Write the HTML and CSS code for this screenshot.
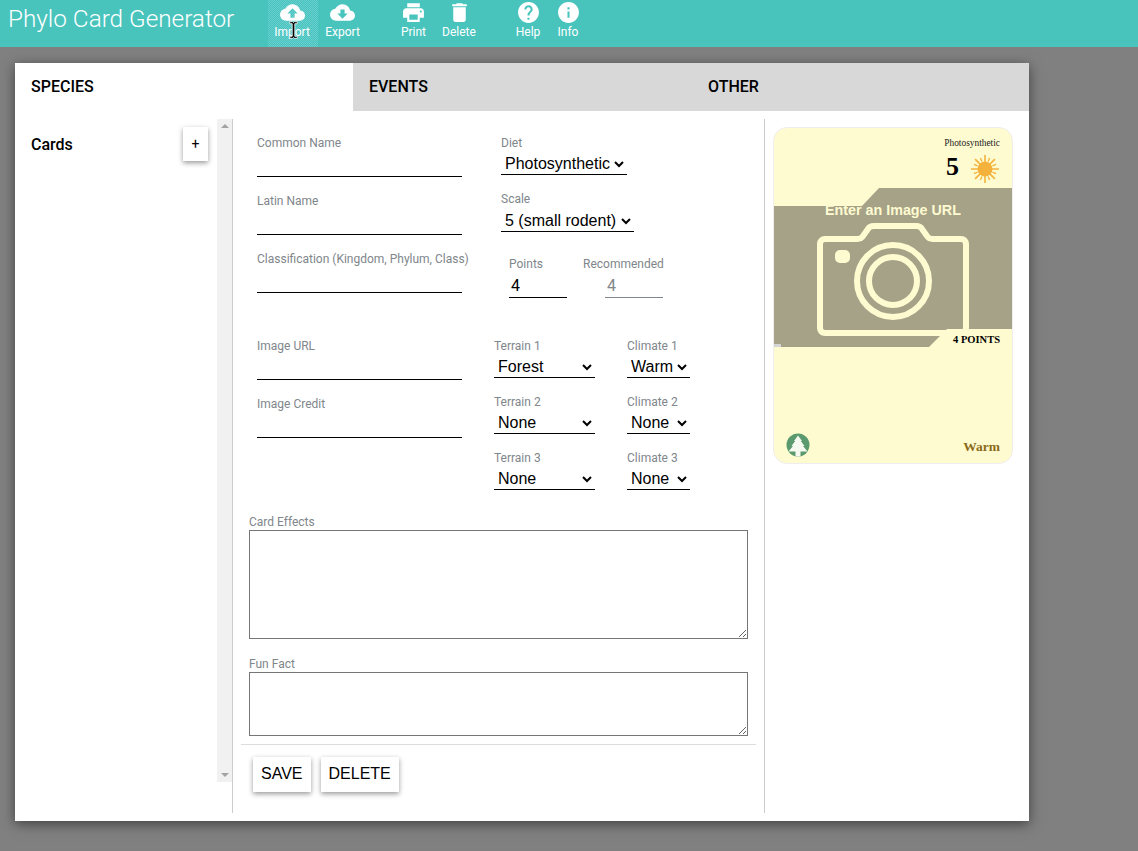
FILE: index.html
```html
<!DOCTYPE html>
<html lang="en">
<head>
    <meta charset="UTF-8">
    <meta name="viewport" content="width=device-width, initial-scale=1.0">
    <title>Phylo Card Generator</title>
    <link rel="stylesheet" href="styles.css">
</head>
<body>
    <header class="topbar">
        <h1 class="app-title">Phylo Card Generator</h1>
        <nav class="tools">
            <a class="tool tool-import">
                <svg class="tool-icon" viewBox="0 0 24 24"><path d="M19.35 10.04A7.49 7.49 0 0 0 12 4C9.11 4 6.6 5.64 5.35 8.04A5.99 5.99 0 0 0 0 14c0 3.31 2.69 6 6 6h13c2.76 0 5-2.24 5-5 0-2.64-2.05-4.78-4.65-4.96zM14 13v4h-4v-4H7l5-5 5 5h-3z"/></svg>
                <span>Import</span>
            </a>
            <a class="tool tool-export">
                <svg class="tool-icon" viewBox="0 0 24 24"><path d="M19.35 10.04A7.49 7.49 0 0 0 12 4C9.11 4 6.6 5.64 5.35 8.04A5.99 5.99 0 0 0 0 14c0 3.31 2.69 6 6 6h13c2.76 0 5-2.24 5-5 0-2.64-2.05-4.78-4.65-4.96zM17 13l-5 5-5-5h3V9h4v4h3z"/></svg>
                <span>Export</span>
            </a>
            <a class="tool tool-print">
                <svg class="tool-icon" viewBox="0 0 24 24"><path d="M19 8H5c-1.66 0-3 1.34-3 3v6h4v4h12v-4h4v-6c0-1.66-1.34-3-3-3zm-3 11H8v-5h8v5zm3-7c-.55 0-1-.45-1-1s.45-1 1-1 1 .45 1 1-.45 1-1 1zm-1-9H6v4h12V3z"/></svg>
                <span>Print</span>
            </a>
            <a class="tool tool-delete">
                <svg class="tool-icon" viewBox="0 0 24 24"><path d="M6 19c0 1.1.9 2 2 2h8c1.1 0 2-.9 2-2V7H6v12zM19 4h-3.500l-1-1h-5l-1 1H5v2h14V4z"/></svg>
                <span>Delete</span>
            </a>
            <a class="tool tool-help">
                <svg class="tool-icon" viewBox="0 0 24 24"><path d="M12 2C6.480 2 2 6.480 2 12s4.480 10 10 10 10-4.480 10-10S17.520 2 12 2zm1 17h-2v-2h2v2zm2.070-7.750l-.9.920C13.450 12.900 13 13.500 13 15h-2v-.5c0-1.100.450-2.100 1.170-2.830l1.240-1.260c.37-.36.590-.86.590-1.410 0-1.100-.9-2-2-2s-2 .9-2 2H8c0-2.210 1.790-4 4-4s4 1.790 4 4c0 .88-.36 1.680-.93 2.250z"/></svg>
                <span>Help</span>
            </a>
            <a class="tool tool-info">
                <svg class="tool-icon" viewBox="0 0 24 24"><path d="M12 2C6.480 2 2 6.480 2 12s4.480 10 10 10 10-4.480 10-10S17.520 2 12 2zm1 15h-2v-6h2v6zm0-8h-2V7h2v2z"/></svg>
                <span>Info</span>
            </a>
        </nav>
    </header>

    <main class="panel">
        <div class="tabs">
            <div class="tab active">SPECIES</div>
            <div class="tab">EVENTS</div>
            <div class="tab">OTHER</div>
        </div>
        <div class="workspace">
            <aside class="sidebar">
                <div class="sidebar-head">
                    <h2>Cards</h2>
                    <button class="add-btn" type="button">+</button>
                </div>
            </aside>
            <div class="scrollbar">
                <span class="arrow-up"></span>
                <span class="arrow-down"></span>
            </div>

            <section class="editor">
                <div class="fields">
                    <div class="col-left">
                        <div class="field">
                            <label>Common Name</label>
                            <input type="text">
                        </div>
                        <div class="field">
                            <label>Latin Name</label>
                            <input type="text">
                        </div>
                        <div class="field">
                            <label>Classification (Kingdom, Phylum, Class)</label>
                            <input type="text">
                        </div>
                        <div class="field field-image">
                            <label>Image URL</label>
                            <input type="text">
                        </div>
                        <div class="field">
                            <label>Image Credit</label>
                            <input type="text">
                        </div>
                    </div>
                    <div class="col-right">
                        <div class="pick">
                            <label>Diet</label>
                            <select class="sel-diet"><option>Photosynthetic</option></select>
                        </div>
                        <div class="pick">
                            <label>Scale</label>
                            <select class="sel-scale"><option>5 (small rodent)</option></select>
                        </div>
                        <div class="points-row">
                            <div class="num">
                                <label>Points</label>
                                <input type="text" value="4">
                            </div>
                            <div class="num num-off">
                                <label>Recommended</label>
                                <input type="text" value="4" disabled>
                            </div>
                        </div>
                        <div class="habitat">
                            <div class="pick">
                                <label>Terrain 1</label>
                                <select class="sel-terrain"><option>Forest</option></select>
                            </div>
                            <div class="pick">
                                <label>Climate 1</label>
                                <select class="sel-climate"><option>Warm</option></select>
                            </div>
                            <div class="pick">
                                <label>Terrain 2</label>
                                <select class="sel-terrain"><option>None</option></select>
                            </div>
                            <div class="pick">
                                <label>Climate 2</label>
                                <select class="sel-climate"><option>None</option></select>
                            </div>
                            <div class="pick">
                                <label>Terrain 3</label>
                                <select class="sel-terrain"><option>None</option></select>
                            </div>
                            <div class="pick">
                                <label>Climate 3</label>
                                <select class="sel-climate"><option>None</option></select>
                            </div>
                        </div>
                    </div>
                </div>

                <div class="text-block block-effects">
                    <label>Card Effects</label>
                    <textarea class="effects"></textarea>
                </div>
                <div class="text-block">
                    <label>Fun Fact</label>
                    <textarea class="fact"></textarea>
                </div>
                <div class="actions">
                    <button type="button">SAVE</button>
                    <button type="button">DELETE</button>
                </div>
            </section>

            <section class="preview">
                <div class="card">
                    <div class="card-top">
                        <div class="card-diet">Photosynthetic</div>
                        <div class="card-scale">
                            <span class="scale-num">5</span>
                            <svg class="sun" viewBox="0 0 28 28">
                                <circle cx="14" cy="14" r="7.500"/>
                                <path class="rays" d="M14 0v7M14 21v7M0 14h7M21 14h7M4.100 4.100l5 5M18.900 18.900l5 5M23.900 4.100l-5 5M9.100 18.900l-5 5"/>
                                <path class="rays-short" d="M18.600 2.900l-1.500 3.700M10.900 21.400l-1.500 3.700M9.400 2.900l1.500 3.700M17.100 21.400l1.500 3.700M2.900 9.400l3.700 1.500M21.400 17.100l3.700 1.500M2.900 18.600l3.700-1.500M21.400 10.900l3.700-1.500"/>
                            </svg>
                        </div>
                    </div>
                    <div class="card-picture">
                        <div class="picture-label">Enter an Image URL</div>
                        <svg class="camera" viewBox="0 0 158 120">
                            <path d="M10 16h32c3 0 5-1 6-3l5-7c1-2 3-3 6-3h42c3 0 5 1 6 3l5 7c1 2 3 3 6 3h28c3 0 5 2 5 5v84c0 3-2 5-5 5H10c-3 0-5-2-5-5V21c0-3 2-5 5-5z"/>
                            <circle cx="78" cy="58" r="36"/>
                            <circle cx="78" cy="58" r="24"/>
                            <rect class="camera-dot" x="20" y="27" width="15" height="13" rx="5"/>
                        </svg>
                        <span class="broken-img"></span>
                    </div>
                    <div class="card-points">4 POINTS</div>
                    <div class="card-bottom">
                        <svg class="tree" viewBox="0 0 24 24">
                            <circle class="tree-bg" cx="12" cy="12" r="11.500"/>
                            <path class="tree-shape" d="M12 2.500L16 8h-1.200l3.700 5H17l4.500 5.500h-7v5h-5v-5h-7L7 13H5.500l3.700-5H8z"/>
                        </svg>
                        <span class="card-climate">Warm</span>
                    </div>
                </div>
            </section>
        </div>
    </main>

    <svg class="cursor" viewBox="0 0 9 18"><path d="M.7.700h3l.8.800.8-.8h3v2H5.800v12.600h2.500v2h-3l-.8-.8-.8.800h-3v-2h2.500V2.700H.7z"/></svg>
</body>
</html>
```

FILE: styles.css
```css
* {
    box-sizing: border-box;
}
html, body {
    height: 100%;
}
body {
    margin: 0;
    background: #808080;
    font-family: Roboto, "Liberation Sans", sans-serif;
    overflow: hidden;
}

/* top bar */
.topbar {
    display: flex;
    height: 47px;
    background: #48c4bd;
    color: #fff;
}
.app-title {
    margin: 0;
    width: 268px;
    padding: 3px 0 0 8px;
    font-size: 24.300px;
    font-weight: 300;
    line-height: 32px;
    white-space: nowrap;
}
.tools {
    display: flex;
}
.tool {
    display: flex;
    flex-direction: column;
    align-items: center;
    width: 40px;
    font-size: 12px;
    line-height: 14px;
}
.tool-icon {
    width: 25px;
    height: 25px;
    fill: #fff;
    display: block;
}
.tool-import {
    width: 50px;
    padding-right: 2px;
    background-color: #48c4bd;
    background-image: repeating-conic-gradient(#48c4bd 0 25%, #68ced0 0 50%);
    background-size: 2px 2px;
}
.tool-export { width: 49px; }
.tool-print { margin-left: 22px; width: 49px; }
.tool-delete { width: 42px; }
.tool-help { margin-left: 28px; }

/* main panel */
.panel {
    width: 1014px;
    margin: 16px 0 0 15px;
    height: 758px;
    background: #fff;
    box-shadow: 0 3px 12px rgba(0, 0, 0, 0.5);
}
.tabs {
    display: flex;
    height: 48px;
    background: #d8d8d8;
}
.tab {
    width: 338px;
    padding-left: 16px;
    font-size: 16px;
    font-weight: 500;
    line-height: 47px;
    color: #000;
}
.tab:last-child {
    padding-left: 17px;
}
.tab.active {
    background: #fff;
}
.workspace {
    display: flex;
    height: 694px;
    margin-top: 8px;
}

/* cards list */
.sidebar {
    width: 202px;
}
.sidebar-head {
    display: flex;
    justify-content: space-between;
    padding: 8px 9px 0 16px;
}
.sidebar-head h2 {
    margin: 0;
    font-size: 16px;
    font-weight: 500;
    line-height: 36px;
}
.add-btn {
    width: 25px;
    height: 34px;
    padding: 0;
    border: none;
    background: #fff;
    font-family: inherit;
    font-size: 14px;
    box-shadow: 0 2px 5px rgba(0, 0, 0, 0.4);
}
.scrollbar {
    display: flex;
    flex-direction: column;
    justify-content: space-between;
    align-items: center;
    width: 15px;
    height: 663px;
    padding: 5px 0;
    background: #f1f1f1;
}
.arrow-up {
    border: 4px solid transparent;
    border-top: none;
    border-bottom: 4px solid #a3a3a3;
}
.arrow-down {
    border: 4px solid transparent;
    border-bottom: none;
    border-top: 4px solid #a3a3a3;
}

/* form */
.editor {
    width: 533px;
    border-left: 1px solid #ccc;
    border-right: 1px solid #ccc;
    padding: 0 8px;
}
label {
    display: block;
    font-size: 12px;
    line-height: 14px;
    color: #80868b;
}
input, select, textarea {
    font-family: "Liberation Sans", Arial, sans-serif;
    color: #000;
}
.fields {
    display: flex;
    height: 396px;
    padding-top: 17px;
}
.col-left {
    width: 256px;
    padding-left: 16px;
}
.field {
    height: 58px;
}
.field label {
    white-space: nowrap;
}
.field input {
    display: block;
    width: 205px;
    height: 22px;
    margin-top: 5px;
    border: none;
    border-bottom: 1px solid #000;
    outline: none;
}
.field-image {
    margin-top: 29px;
}
.col-right {
    padding-left: 4px;
}
.pick label {
    margin-bottom: 3px;
}
.pick select {
    display: block;
    height: 22px;
    font-size: 16px;
    background: #fff;
    border: none;
    border-bottom: 1px solid #000;
    border-radius: 0;
    outline: none;
}
.col-right > .pick {
    height: 56px;
}
.pick .sel-diet {
    width: 126px;
}
.pick .sel-scale {
    width: 133px;
    margin-top: 4px;
}
.points-row {
    display: flex;
    gap: 16px;
    padding: 9px 0 0 8px;
    height: 91px;
}
.num input {
    display: block;
    width: 58px;
    height: 24px;
    margin-top: 3px;
    padding: 0 2px;
    font-size: 16px;
    font-family: Roboto, sans-serif;
    border: none;
    border-bottom: 1px solid #000;
    background: #fff;
    outline: none;
}
.num-off input {
    margin-left: 22px;
    color: #80868b;
    border-bottom-color: #80868b;
}
.habitat {
    display: grid;
    grid-template-columns: 133px 70px;
    grid-auto-rows: 56px;
    margin-left: -7px;
}
.sel-terrain {
    width: 101px;
}
.sel-climate {
    width: 63px;
}
.text-block {
    margin-bottom: 8px;
    padding: 0 0 0 8px;
}
.block-effects {
    margin-bottom: 18px;
}
.text-block label {
    margin-bottom: 1px;
}
.text-block textarea {
    display: block;
    width: 499px;
    padding: 2px;
    border: 1px solid #767676;
    border-radius: 0;
    outline: none;
}
.effects {
    height: 109px;
}
.fact {
    height: 64px;
}
.actions {
    display: flex;
    gap: 10px;
    padding: 12px 0 0 12px;
    border-top: 1px solid #ddd;
}
.actions button {
    height: 35px;
    padding: 0 8px 2px;
    border: none;
    background: #fff;
    font-family: "Liberation Sans", Arial, sans-serif;
    font-size: 16px;
    color: #000;
    box-shadow: 0 2px 5px rgba(0, 0, 0, 0.4);
}

/* card preview */
.preview {
    padding: 8px 0 0 8px;
}
.card {
    position: relative;
    width: 240px;
    height: 337px;
    background: #fffbd0;
    border: 1px solid #eee;
    border-radius: 14px;
    font-family: "Liberation Serif", "Times New Roman", serif;
    color: #000;
}
.card-top {
    height: 60px;
    padding: 9px 12px 0 0;
    text-align: right;
}
.card-diet {
    font-size: 9.400px;
    line-height: 12px;
    color: #222;
}
.card-scale {
    display: flex;
    justify-content: flex-end;
    align-items: center;
    gap: 12px;
    margin-top: 3px;
    font-size: 26px;
    font-weight: bold;
}
.scale-num {
    margin-bottom: 3px;
}
.sun {
    width: 28px;
    height: 28px;
    margin-right: 1px;
    fill: #f4b23c;
}
.rays {
    stroke: #f4b23c;
    stroke-width: 1.600;
}
.rays-short {
    stroke: #f4b23c;
    stroke-width: 1.300;
}
.card-picture {
    position: relative;
    height: 159px;
    background: #a5a288;
    overflow: hidden;
    clip-path: polygon(0 18px, 88px 18px, 105px 0, 100% 0, 100% 100%, 155px 100%, 0 100%);
}
.picture-label {
    padding-top: 14px;
    text-align: center;
    font-family: "Liberation Sans", Arial, sans-serif;
    font-size: 14.300px;
    font-weight: bold;
    line-height: 16px;
    color: #fffbd0;
}
.camera {
    display: block;
    width: 158px;
    height: 120px;
    margin: 5px 0 0 41px;
    fill: none;
    stroke: #fffbd0;
    stroke-width: 6;
}
.camera-dot {
    fill: #fffbd0;
    stroke: none;
}
.broken-img {
    position: absolute;
    left: 0;
    bottom: 0;
    width: 7px;
    height: 3px;
    background: #d5d5d5;
}
.card-points {
    position: absolute;
    right: 0;
    top: 201px;
    width: 83px;
    height: 18px;
    padding: 4px 12px 0 0;
    background: #fffbd0;
    clip-path: polygon(18px 0, 100% 0, 100% 100%, 0 100%);
    text-align: right;
    font-size: 10.500px;
    font-weight: bold;
    line-height: 14px;
    white-space: nowrap;
}
.card-bottom {
    display: flex;
    justify-content: space-between;
    align-items: flex-start;
    padding: 86px 12px 0 12px;
}
.tree {
    width: 24px;
    height: 24px;
}
.tree-bg {
    fill: #5a9a6e;
}
.tree-shape {
    fill: #f6f9f0;
}
.card-climate {
    margin-top: 6px;
    font-size: 13.500px;
    font-weight: bold;
    line-height: 16px;
    color: #8a6a1a;
}

.cursor {
    position: absolute;
    left: 289px;
    top: 21px;
    width: 9px;
    height: 18px;
    fill: #000;
    stroke: #fff;
    stroke-width: 0.8;
}
```
